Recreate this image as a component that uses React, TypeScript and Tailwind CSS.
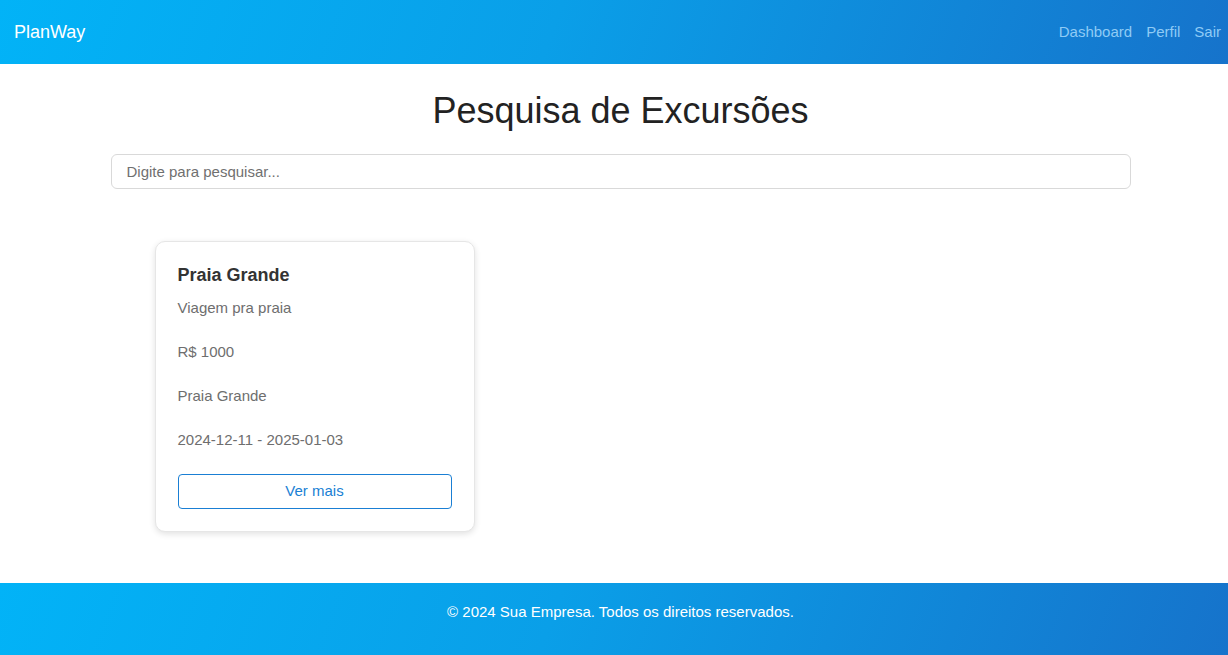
import { useState } from "react";

type Excursion = {
  id: number;
  title: string;
  description: string;
  price: number;
  location: string;
  start: string;
  end: string;
};

const excursions: Excursion[] = [
  {
    id: 1,
    title: "Praia Grande",
    description: "Viagem pra praia",
    price: 1000,
    location: "Praia Grande",
    start: "2024-12-11",
    end: "2025-01-03",
  },
];

function Header() {
  return (
    <header className="h-16 flex items-center justify-between pl-[14px] pr-[7px] bg-[linear-gradient(110deg,#02b3f7_0%,#0a9fe8_45%,#1673cb_100%)]">
      <span className="text-white text-[18px]">PlanWay</span>
      <nav className="flex gap-[14px] text-[15px] text-[#8fcbf5]">
        <a href="#">Dashboard</a>
        <a href="#">Perfil</a>
        <a href="#">Sair</a>
      </nav>
    </header>
  );
}

function ExcursionCard({ item }: { item: Excursion }) {
  return (
    <div className="w-[320px] rounded-[10px] border border-[#e6e6e6] bg-white px-[22px] pt-[22px] pb-[22px] shadow-[0_2px_6px_rgba(0,0,0,0.12)]">
      <h3 className="text-[18px] font-bold text-[#333] leading-[22px]">{item.title}</h3>
      <div className="text-[15px] text-[#6e6e6e] leading-[18px]">
        <p className="mt-[13px]">{item.description}</p>
        <p className="mt-[26px]">R$ {item.price}</p>
        <p className="mt-[26px]">{item.location}</p>
        <p className="mt-[26px]">
          {item.start} - {item.end}
        </p>
      </div>
      <button className="mt-[25px] w-full h-[35px] rounded-[4px] border border-[#1a7fd4] text-[#1a7fd4] text-[15px] bg-white">
        Ver mais
      </button>
    </div>
  );
}

export default function App() {
  const [query, setQuery] = useState("");
  const results = excursions.filter((e) => e.title.toLowerCase().includes(query.toLowerCase()));

  return (
    <div className="min-h-[655px] flex flex-col bg-white font-['Liberation_Sans',Arial,sans-serif]">
      <Header />
      <main className="flex-1 pl-[13px]">
        <div className="w-[1020px] mx-auto">
          <h1 className="text-center text-[36px] text-[#222] leading-[42px] mt-[26px]">Pesquisa de Excursões</h1>
          <input
            value={query}
            onChange={(e) => setQuery(e.target.value)}
            placeholder="Digite para pesquisar..."
            className="mt-[22px] w-full h-[35px] rounded-[6px] border border-[#d9d9d9] px-[15px] text-[15px] text-[#333] placeholder:text-[#707070] outline-none"
          />
          <div className="flex flex-wrap gap-5 pl-[44px] pt-[52px] pb-[51px]">
            {results.map((item) => (
              <ExcursionCard key={item.id} item={item} />
            ))}
          </div>
        </div>
      </main>
      <footer className="h-[72px] flex items-start justify-center pt-[18px] pl-[13px] text-white text-[15px] bg-[linear-gradient(110deg,#02b3f7_0%,#0a9fe8_45%,#1673cb_100%)]">
        © 2024 Sua Empresa. Todos os direitos reservados.
      </footer>
    </div>
  );
}
